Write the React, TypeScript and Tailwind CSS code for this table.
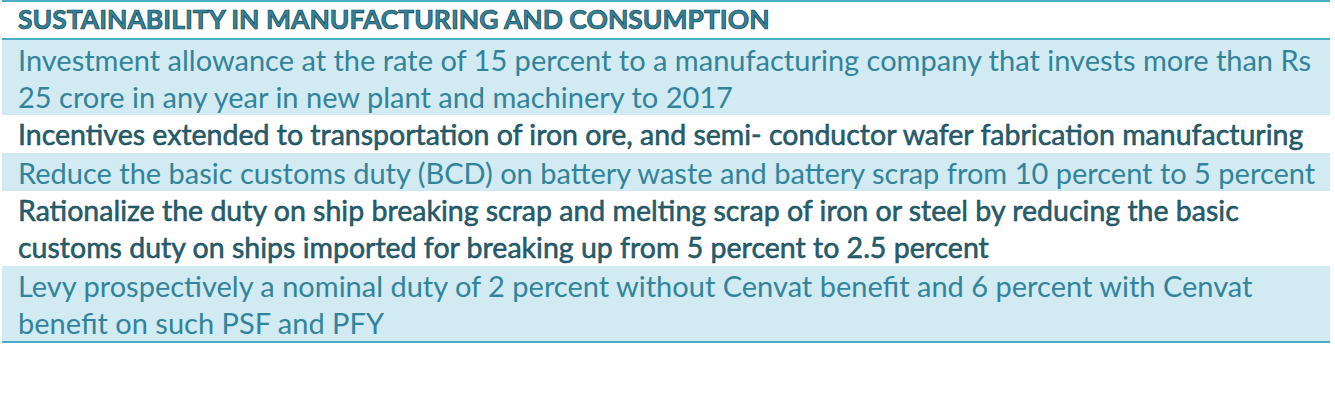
import React from 'react';

const rows = [
  {
    lines: [
      'Investment allowance at the rate of 15 percent to a manufacturing company that invests more than Rs',
      '25 crore in any year in new plant and machinery to 2017',
    ],
    shaded: true,
  },
  {
    lines: ['Incentives extended to transportation of iron ore, and semi- conductor wafer fabrication manufacturing'],
    shaded: false,
  },
  {
    lines: ['Reduce the basic customs duty (BCD) on battery waste and battery scrap from 10 percent to 5 percent'],
    shaded: true,
  },
  {
    lines: [
      'Rationalize the duty on ship breaking scrap and melting scrap of iron or steel by reducing the basic',
      'customs duty on ships imported for breaking up from 5 percent to 2.5 percent',
    ],
    shaded: false,
  },
  {
    lines: [
      'Levy prospectively a nominal duty of 2 percent without Cenvat benefit and 6 percent with Cenvat',
      'benefit on such PSF and PFY',
    ],
    shaded: true,
  },
];

const App: React.FC = () => {
  return (
    <div className="w-[1335px] h-[416px] bg-white font-['Lato','Open_Sans',sans-serif]">
      <div className="ml-[2px] w-[1328px] border-t-2 border-b-2 border-[#4bacc6]">
        {/* Header */}
        <div className="h-[38px] border-b-2 border-[#4bacc6] pl-4 flex items-center">
          <span className="text-[26.5px] font-bold text-[#31849b] [-webkit-text-stroke:0.7px_#17404b]">
            SUSTAINABILITY IN MANUFACTURING AND CONSUMPTION
          </span>
        </div>

        {rows.map((row, i) => (
          <div
            key={i}
            className={`pl-4 pr-1 pt-[1px] leading-[37px] whitespace-nowrap ${
              row.shaded
                ? 'bg-[#d2eaf1] text-[#31849b] text-[29px]'
                : 'bg-white text-[#226272] text-[28.5px] [-webkit-text-stroke:0.5px_#17404b]'
            }`}
          >
            {row.lines.map((line, j) => (
              <div key={j}>{line}</div>
            ))}
          </div>
        ))}
      </div>
    </div>
  );
};

export default App;
